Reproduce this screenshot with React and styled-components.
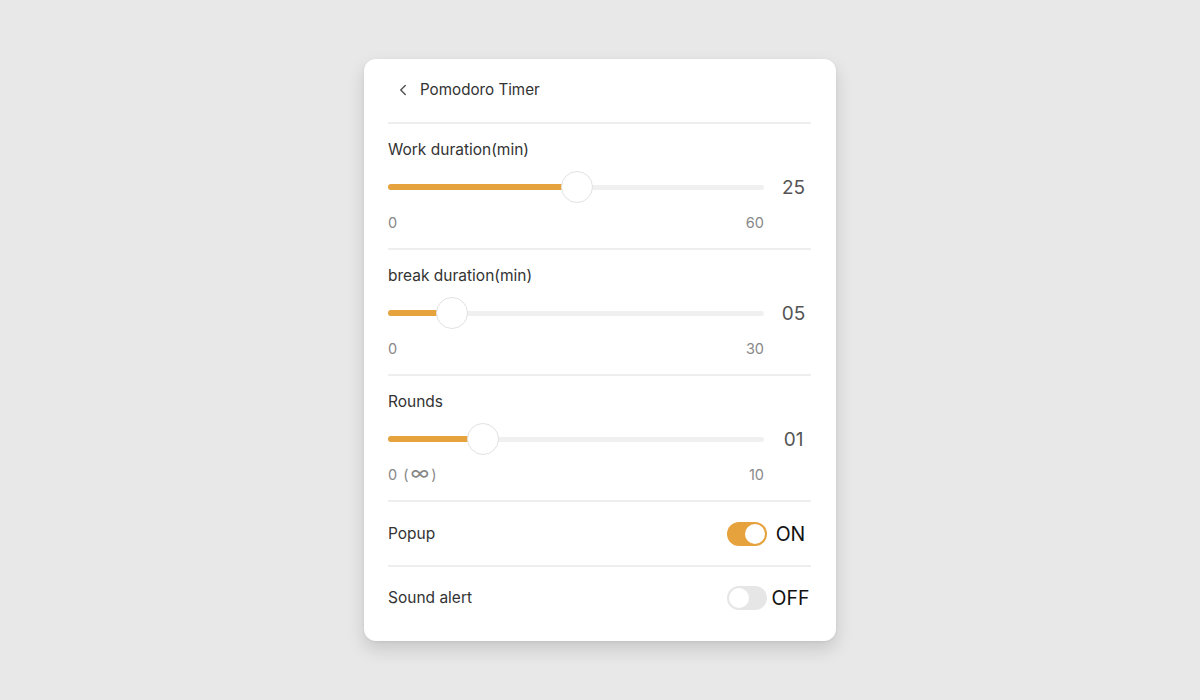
import styled, { createGlobalStyle } from 'styled-components';
import { ChevronLeft } from 'lucide-react';

const ORANGE = '#E6A23C';

const sliders = [
  { label: 'Work duration(min)', value: '25', min: '0', max: '60', pos: 50.3 },
  { label: 'break duration(min)', value: '05', min: '0', max: '30', pos: 17 },
  { label: 'Rounds', value: '01', min: '0', max: '10', pos: 25.3, infinite: true },
];

export default function App() {
  return (
    <>
      <GlobalStyle />
      <Page>
        <Card>
          <Header>
            <ChevronLeft size={18} strokeWidth={2} color="#555" />
            <Title>Pomodoro Timer</Title>
          </Header>
          {sliders.map((s) => (
            <Section key={s.label}>
              <Label>{s.label}</Label>
              <SliderRow>
                <Track>
                  <Fill style={{ width: `${s.pos}%` }} />
                  <Thumb style={{ left: `${s.pos}%` }} />
                </Track>
                <Value>{s.value}</Value>
              </SliderRow>
              <Range>
                <span>
                  {s.min}
                  {s.infinite && (
                    <Infinite>
                      (<InfGlyph>∞</InfGlyph>)
                    </Infinite>
                  )}
                </span>
                <span>{s.max}</span>
              </Range>
            </Section>
          ))}
          <ToggleRow>
            <Label>Popup</Label>
            <ToggleWrap>
              <Switch $on />
              <SwitchText>ON</SwitchText>
            </ToggleWrap>
          </ToggleRow>
          <ToggleRow $last>
            <Label>Sound alert</Label>
            <ToggleWrap>
              <Switch />
              <SwitchText>OFF</SwitchText>
            </ToggleWrap>
          </ToggleRow>
        </Card>
      </Page>
    </>
  );
}

const GlobalStyle = createGlobalStyle`
  body {
    margin: 0;
    background: #e8e8e8;
    font-family: Inter, "Noto Sans", sans-serif;
  }
`;

const Page = styled.div`
  width: 1200px;
  height: 700px;
  display: flex;
  justify-content: center;
  align-items: flex-start;
  padding-top: 59px;
  box-sizing: border-box;
`;

const Card = styled.div`
  width: 472px;
  height: 582px;
  box-sizing: border-box;
  background: #fff;
  border-radius: 12px;
  box-shadow: 0 8px 18px rgba(0, 0, 0, 0.14), 0 1px 3px rgba(0, 0, 0, 0.06);
  padding: 0 25px 0 24px;
  display: flex;
  flex-direction: column;
`;

const Header = styled.div`
  height: 65px;
  box-sizing: border-box;
  flex-shrink: 0;
  display: flex;
  align-items: center;
  gap: 8px;
  padding: 0 0 2px 6px;
  border-bottom: 2px solid #eeeeee;
`;

const Title = styled.span`
  font-size: 15.2px;
  color: #333;
`;

const Section = styled.div`
  height: 126px;
  flex-shrink: 0;
  box-sizing: border-box;
  border-bottom: 2px solid #eeeeee;
  display: flex;
  flex-direction: column;
  padding-top: 16px;
`;

const Label = styled.div`
  font-size: 15.5px;
  color: #333;
  line-height: 20px;
`;

const SliderRow = styled.div`
  display: flex;
  align-items: center;
  margin-top: 10px;
  height: 34px;
`;

const Track = styled.div`
  position: relative;
  flex: 0 0 376px;
  height: 5px;
  border-radius: 3px;
  background: #f0f0f0;
`;

const Fill = styled.div`
  height: 6px;
  margin-top: -0.5px;
  border-radius: 3px;
  background: ${ORANGE};
`;

const Thumb = styled.div`
  position: absolute;
  top: 50%;
  width: 32px;
  height: 32px;
  box-sizing: border-box;
  border-radius: 50%;
  background: #fff;
  border: 1px solid #e2e2e2;
  transform: translate(-50%, -50%);
`;

const Value = styled.div`
  flex: 1;
  text-align: center;
  padding-left: 12px;
  font-size: 19px;
  color: #555;
`;

const Range = styled.div`
  width: 376px;
  display: flex;
  justify-content: space-between;
  margin-top: 9px;
  font-size: 14.5px;
  color: #888;
  line-height: 20px;
`;

const Infinite = styled.span`
  margin-left: 6px;
`;

const InfGlyph = styled.span`
  font-size: 20px;
  line-height: 14px;
  margin: 0 2px;
`;

const ToggleRow = styled.div`
  height: ${(p) => (p.$last ? 61 : 65)}px;
  flex-shrink: 0;
  box-sizing: border-box;
  display: flex;
  align-items: center;
  justify-content: space-between;
  border-bottom: ${(p) => (p.$last ? 'none' : '2px solid #eeeeee')};
`;

const ToggleWrap = styled.div`
  display: flex;
  align-items: center;
  gap: 3px;
`;

const Switch = styled.div`
  position: relative;
  width: 40px;
  height: 24px;
  border-radius: 12px;
  background: ${(p) => (p.$on ? ORANGE : '#e6e6e6')};

  &::after {
    content: '';
    position: absolute;
    top: 2px;
    left: ${(p) => (p.$on ? 18 : 2)}px;
    width: 20px;
    height: 20px;
    border-radius: 50%;
    background: #fff;
  }
`;

const SwitchText = styled.span`
  font-size: 19.5px;
  color: #111;
  width: 41px;
  text-align: center;
`;
